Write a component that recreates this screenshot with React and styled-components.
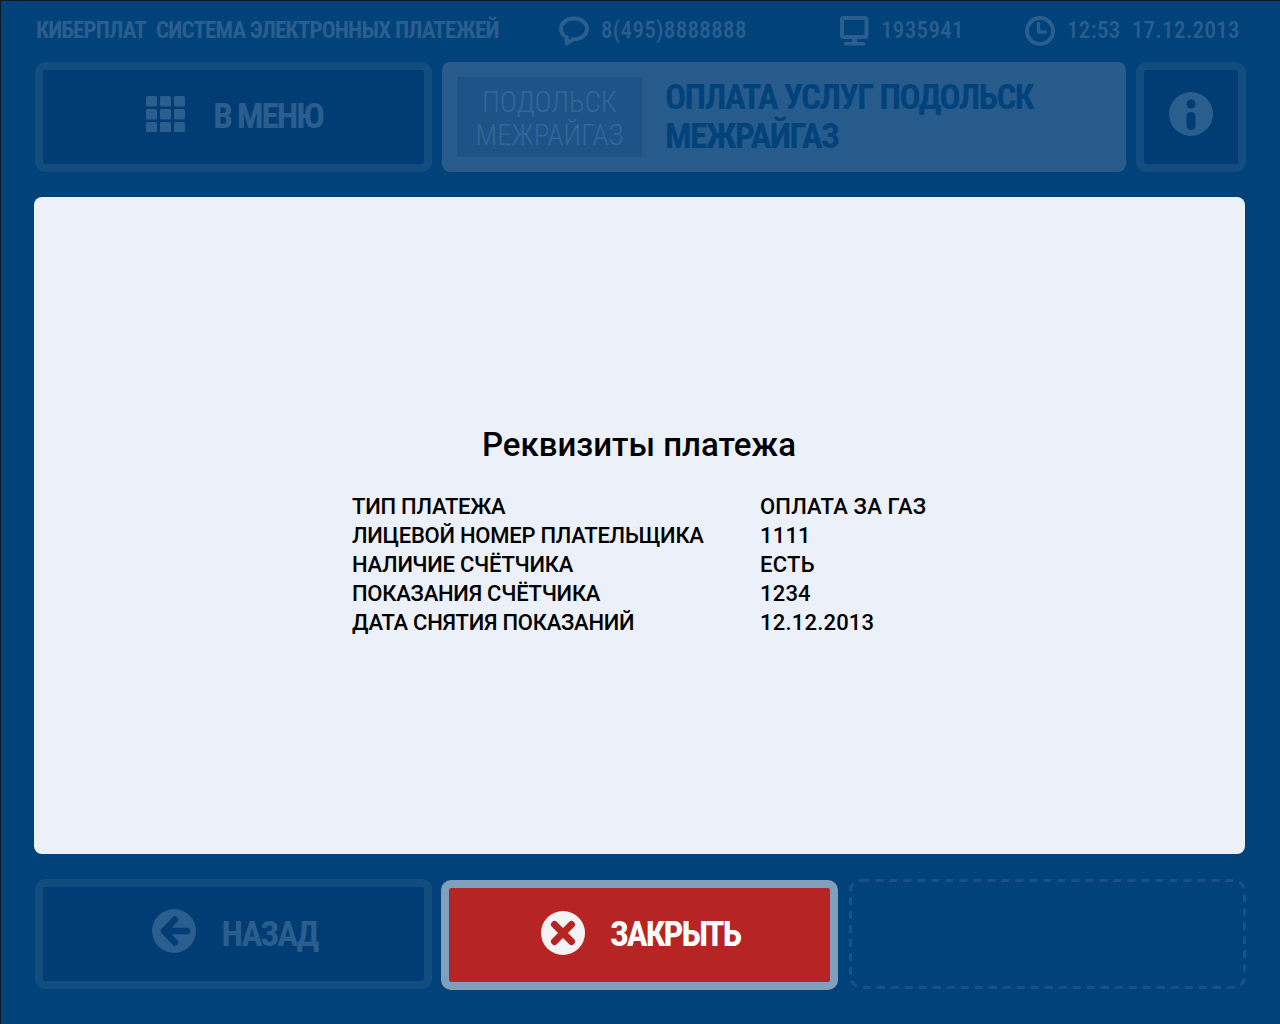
import React from "react";
import styled, { createGlobalStyle } from "styled-components";

const rows = [
  ["ТИП ПЛАТЕЖА", "ОПЛАТА ЗА ГАЗ"],
  ["ЛИЦЕВОЙ НОМЕР ПЛАТЕЛЬЩИКА", "1111"],
  ["НАЛИЧИЕ СЧЁТЧИКА", "ЕСТЬ"],
  ["ПОКАЗАНИЯ СЧЁТЧИКА", "1234"],
  ["ДАТА СНЯТИЯ ПОКАЗАНИЙ", "12.12.2013"],
];

const MenuIcon = () => (
  <svg width="39" height="36" viewBox="0 0 39 36" fill="#2a5e8e">
    {[0, 14, 28].map((x) =>
      [0, 13, 26].map((y) => <rect key={`${x}-${y}`} x={x} y={y} width="11" height="10.5" rx="1.5" />)
    )}
  </svg>
);

const ChatIcon = () => (
  <svg width="30" height="30" viewBox="0 0 30 30" fill="none">
    <path
      d="M15 2.500C7.800 2.500 2 6.800 2 12.700c0 3.900 2.400 7 5.800 8.800l-.1 6 6.600-4.200H15c7.200 0 13-4.700 13-10.600C28 6.800 22.200 2.500 15 2.500z"
      stroke="#2a5e8e"
      strokeWidth="4"
      strokeLinejoin="round"
    />
  </svg>
);

const MonitorIcon = () => (
  <svg width="29" height="30" viewBox="0 0 29 30" fill="none">
    <rect x="2" y="2" width="24.500" height="19" rx="1.500" stroke="#2a5e8e" strokeWidth="4" />
    <rect x="12" y="22" width="5" height="5" fill="#2a5e8e" />
    <rect x="4" y="26" width="21" height="3.500" rx="1" fill="#2a5e8e" />
  </svg>
);

const ClockIcon = () => (
  <svg width="30" height="30" viewBox="0 0 30 30" fill="none">
    <circle cx="15" cy="15" r="13" stroke="#2a5e8e" strokeWidth="4" />
    <path d="M13.500 7.500V16h7" stroke="#2a5e8e" strokeWidth="3.400" strokeLinecap="round" strokeLinejoin="round" />
  </svg>
);

const InfoIcon = () => (
  <svg width="44" height="44" viewBox="0 0 44 44">
    <circle cx="22" cy="22" r="22" fill="#2a5e8e" />
    <circle cx="22" cy="12" r="4.500" fill="#023c74" />
    <rect x="17.500" y="20" width="9" height="18" rx="4.500" fill="#023c74" />
  </svg>
);

const BackIcon = () => (
  <svg width="44" height="44" viewBox="0 0 44 44" fill="none">
    <circle cx="22" cy="22" r="22" fill="#2a5e8e" />
    <path
      d="M35 22H12M23 10.500L12 22l11 11.500"
      stroke="#023c74"
      strokeWidth="6.500"
      strokeLinecap="round"
      strokeLinejoin="round"
    />
  </svg>
);

const CloseIcon = () => (
  <svg width="44" height="44" viewBox="0 0 44 44" fill="none">
    <circle cx="22" cy="22" r="22" fill="#f3f3f3" />
    <path d="M13.500 13.500l17 17M30.500 13.500l-17 17" stroke="#b72424" strokeWidth="7" strokeLinecap="round" />
  </svg>
);

const App = () => {
  return (
    <>
      <GlobalStyle />
      <Page>
        <Header>
          <Brand>
            <span>КИБЕРПЛАТ</span>
            <span>СИСТЕМА ЭЛЕКТРОННЫХ ПЛАТЕЖЕЙ</span>
          </Brand>
          <HeaderItem>
            <ChatIcon />
            <span>8(495)8888888</span>
          </HeaderItem>
          <HeaderItem>
            <MonitorIcon />
            <span>1935941</span>
          </HeaderItem>
          <HeaderItem>
            <ClockIcon />
            <span>12:53</span>
            <span>17.12.2013</span>
          </HeaderItem>
        </Header>

        <TopRow>
          <NavButton $shift={2}>
            <IconSlot $lift={6}>
              <MenuIcon />
            </IconSlot>
            <ActionLabel $lift={2}>В МЕНЮ</ActionLabel>
          </NavButton>
          <TitleBar>
            <Tile>
              ПОДОЛЬСК
              <br />
              МЕЖРАЙГАЗ
            </Tile>
            <ServiceName>
              ОПЛАТА УСЛУГ ПОДОЛЬСК
              <br />
              МЕЖРАЙГАЗ
            </ServiceName>
          </TitleBar>
          <InfoButton>
            <IconSlot $lift={6}>
              <InfoIcon />
            </IconSlot>
          </InfoButton>
        </TopRow>

        <Panel>
          <Details>
            <Heading>Реквизиты платежа</Heading>
            <Table>
              {rows.map(([name, value]) => (
                <React.Fragment key={name}>
                  <RowName>{name}</RowName>
                  <RowValue>{value}</RowValue>
                </React.Fragment>
              ))}
            </Table>
          </Details>
        </Panel>

        <BottomRow>
          <NavButton $shift={2} $gap={26}>
            <IconSlot $lift={6}>
              <BackIcon />
            </IconSlot>
            <ActionLabel>НАЗАД</ActionLabel>
          </NavButton>
          <CloseButton>
            <IconSlot $lift={4}>
              <CloseIcon />
            </IconSlot>
            <ActionLabel $light $lift={2}>
              ЗАКРЫТЬ
            </ActionLabel>
          </CloseButton>
          <EmptySlot>
            <svg width="397" height="110" viewBox="0 0 397 110" fill="none">
              <rect
                x="1.500"
                y="1.500"
                width="394"
                height="107"
                rx="11"
                stroke="#1a5183"
                strokeWidth="3"
                strokeDasharray="8 6"
              />
            </svg>
          </EmptySlot>
        </BottomRow>
      </Page>
    </>
  );
};

export default App;

const GlobalStyle = createGlobalStyle`
  html, body {
    margin: 0;
    padding: 0;
    background: #01427a;
  }
  body {
    font-family: "Roboto", "Liberation Sans", sans-serif;
  }
`;

const Page = styled.div`
  width: 1280px;
  height: 1024px;
  box-sizing: border-box;
  overflow: hidden;
  background: #01427a;
  border-top: 1px solid #0a1a2a;
  border-left: 1px solid #0a1a2a;
  padding: 0 34px 0 33px;
`;

const Header = styled.div`
  height: 59px;
  display: grid;
  grid-template-columns: 525px 281px 185px auto;
  align-items: center;
  color: #2a5e8e;
  font-family: "Roboto Condensed", "Roboto", sans-serif;
  font-stretch: condensed;
  font-size: 23px;
`;

const Brand = styled.div`
  display: flex;
  gap: 10px;
  padding-left: 2px;
  font-weight: 700;
  letter-spacing: -0.8px;
`;

const HeaderItem = styled.div`
  display: flex;
  align-items: center;
  gap: 11px;
  font-weight: 500;
  letter-spacing: 0.35px;

  svg {
    margin-right: 1px;
  }
`;

const IconSlot = styled.div`
  display: flex;
  margin-bottom: ${({ $lift }) => $lift ?? 0}px;
`;

const TopRow = styled.div`
  display: flex;
  gap: 10px;
  margin-top: 2px;
  padding-left: 1px;
`;

const NavButton = styled.div`
  width: 397px;
  height: 110px;
  box-sizing: border-box;
  padding-left: ${({ $shift }) => $shift ?? 0}px;
  display: flex;
  align-items: center;
  justify-content: center;
  gap: ${({ $gap }) => $gap ?? 28}px;
  background: #023c74;
  border: 8px solid #134d80;
  border-radius: 10px;
`;

const TitleBar = styled.div`
  width: 684px;
  height: 110px;
  box-sizing: border-box;
  padding: 15px;
  display: flex;
  align-items: center;
  gap: 23px;
  background: #265b8b;
  border-radius: 8px;
`;

const Tile = styled.div`
  width: 185px;
  height: 80px;
  padding-top: 9px;
  box-sizing: border-box;
  text-align: center;
  background: #1d5386;
  color: #33679a;
  font-family: "Roboto Condensed", "Roboto", sans-serif;
  font-stretch: condensed;
  font-weight: 300;
  font-size: 29px;
  line-height: 33px;
`;

const ServiceName = styled.div`
  color: #01427a;
  font-family: "Roboto Condensed", "Roboto", sans-serif;
  font-stretch: condensed;
  font-weight: 700;
  font-size: 35px;
  line-height: 39px;
  letter-spacing: -1.5px;
`;

const InfoButton = styled.div`
  width: 110px;
  height: 110px;
  box-sizing: border-box;
  display: flex;
  align-items: center;
  justify-content: center;
  background: #023c74;
  border: 8px solid #134d80;
  border-radius: 10px;
`;

const Panel = styled.div`
  height: 657px;
  margin-top: 25px;
  margin-right: 1px;
  display: flex;
  align-items: center;
  justify-content: center;
  padding: 11px 1px 0 0;
  box-sizing: border-box;
  background: #ecf1f9;
  border-radius: 8px;
`;

const Details = styled.div`
  width: 574px;
  color: #000;
`;

const Heading = styled.div`
  text-align: center;
  font-size: 33px;
  font-weight: 500;
  line-height: 38px;
  margin-bottom: 28px;
`;

const Table = styled.div`
  display: grid;
  grid-template-columns: 408px auto;
  font-size: 22px;
  font-weight: 500;
  line-height: 29px;
  white-space: nowrap;
`;

const RowName = styled.span`
  letter-spacing: -0.25px;
`;

const RowValue = styled.span`
  letter-spacing: 0.2px;
`;

const BottomRow = styled.div`
  display: flex;
  align-items: flex-start;
  margin-top: 25px;
  padding-left: 1px;
  gap: 9px;
`;

const CloseButton = styled.div`
  width: 397px;
  height: 110px;
  margin-top: 1px;
  padding-left: 2px;
  box-sizing: border-box;
  display: flex;
  align-items: center;
  justify-content: center;
  gap: 25px;
  background: #b72424;
  border: 8px solid #7f9fbc;
  border-radius: 10px;
`;

const ActionLabel = styled.div`
  font-family: "Roboto Condensed", "Roboto", sans-serif;
  font-stretch: condensed;
  font-size: 35px;
  font-weight: 700;
  letter-spacing: -2px;
  margin-bottom: ${({ $lift }) => $lift ?? 0}px;
  color: ${({ $light }) => ($light ? "#fff" : "#2a5e8e")};
`;

const EmptySlot = styled.div`
  width: 397px;
  height: 110px;
  margin-left: 2px;
  display: flex;
`;
